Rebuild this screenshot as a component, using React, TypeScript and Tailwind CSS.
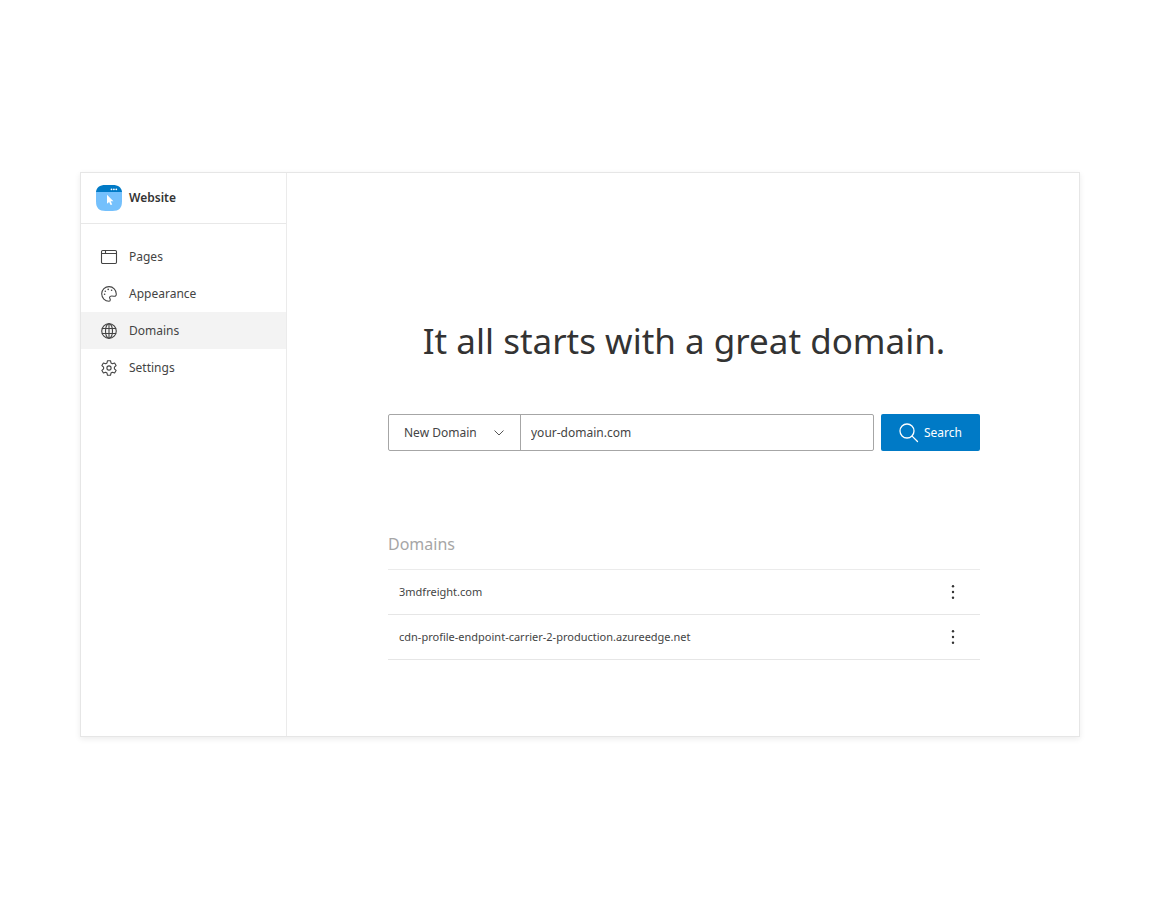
import type { ReactNode } from "react";

function Icon({ children }: { children: ReactNode }) {
  return (
    <svg
      viewBox="0 0 18 18"
      className="size-[18px] shrink-0"
      fill="none"
      stroke="#444"
      strokeWidth="1.1"
      strokeLinecap="round"
      strokeLinejoin="round"
      aria-hidden="true"
    >
      {children}
    </svg>
  );
}

function PagesIcon() {
  return (
    <Icon>
      <rect x="1.5" y="2.5" width="15" height="13" rx="1.2" />
      <path d="M1.5 5.5h15M5.5 2.5v3" />
    </Icon>
  );
}

function PaletteIcon() {
  return (
    <Icon>
      <path d="M9 16.200A7.300 7.300 0 1 1 16.300 9c0 2-1.200 2.500-2.600 2.200-1.900-.4-3.700-.4-4.100.9-.3 1 .6 1.500.7 2.700 0 .8-.5 1.400-1.300 1.400z" />
      <path d="M4.600 9.200h.01M5.300 6.200h.01M8.200 4.400h.01M11.600 5.200h.01" strokeWidth="1.6" />
    </Icon>
  );
}

function GlobeIcon() {
  return (
    <Icon>
      <circle cx="9" cy="9" r="7.3" />
      <ellipse cx="9" cy="9" rx="3.5" ry="7.3" />
      <path d="M2.300 6.500h13.400M2.300 11.500h13.400M9 1.700v14.600" />
    </Icon>
  );
}

function GearIcon() {
  return (
    <Icon>
      <path d="M7.500 1.700h3l.5 2.200 1.400.8 2.200-.7 1.500 2.600-1.700 1.600v1.600l1.700 1.600-1.500 2.600-2.200-.7-1.400.8-.5 2.200h-3L7 14.100l-1.400-.8-2.200.7-1.500-2.600 1.700-1.600V8.200L1.900 6.600 3.400 4l2.200.7L7 3.900z" />
      <circle cx="9" cy="9" r="2.1" />
    </Icon>
  );
}

function Logo() {
  return (
    <svg viewBox="0 0 26 26" className="size-[26px] shrink-0" aria-hidden="true">
      <path d="M0 6.500h26v10c0 6.500-3 9.500-9.500 9.500h-7C3 26 0 23 0 16.500z" fill="#74c0fc" />
      <path d="M0 7C.6 2.300 3.500 0 9.500 0h7C22.500 0 25.400 2.300 26 7z" fill="#007ac6" />
      <g fill="#fff">
        <circle cx="15.500" cy="4.300" r=".9" />
        <circle cx="17.900" cy="4.300" r=".9" />
        <circle cx="20.300" cy="4.300" r=".9" />
        <path d="M11 9.800v9l2.100-1.900 1.500 3.200 1.600-.7-1.500-3.200h2.700z" />
      </g>
    </svg>
  );
}

const links = [
  { label: "Pages", icon: <PagesIcon />, active: false },
  { label: "Appearance", icon: <PaletteIcon />, active: false },
  { label: "Domains", icon: <GlobeIcon />, active: true },
  { label: "Settings", icon: <GearIcon />, active: false },
];

const domains = ["3mdfreight.com", "cdn-profile-endpoint-carrier-2-production.azureedge.net"];

export default function App() {
  return (
    <div className="min-h-screen bg-white px-20 py-43 font-['Noto_Sans',sans-serif] text-[12px] leading-5 text-[#444]">
      <div className="flex border border-[#e6e6e6] bg-white shadow-[0_2px_6px_rgba(0,0,0,0.08)]">
        <aside className="w-[206px] shrink-0 border-r border-[#ebebeb]">
          <div className="flex h-[51px] items-center gap-[7px] border-b border-[#e8e8e8] px-[15px] font-semibold text-[#333]">
            <Logo />
            <span>Website</span>
          </div>
          <nav aria-label="Website" className="pt-[14px]">
            {links.map(({ label, icon, active }) => (
              <a
                key={label}
                href="#"
                aria-current={active ? "page" : undefined}
                className={`flex h-[37px] items-center gap-[11px] px-[19px] ${active ? "bg-[#f3f3f3]" : "bg-white"}`}
              >
                {icon}
                <span>{label}</span>
              </a>
            ))}
          </nav>
        </aside>

        <main className="min-w-0 flex-1 pt-36 pr-[99px] pb-[76px] pl-[101px]">
          <h1 className="text-center text-[35px] leading-[48px] text-[#333]">
            It all starts with a great domain.
          </h1>

          <form className="mt-[49px] flex h-[37px] gap-[7px]" onSubmit={(e) => e.preventDefault()}>
            <div className="flex min-w-0 flex-1 rounded-xs border border-[#a6a6a6]">
              <div className="relative w-[132px] shrink-0 border-r border-[#a6a6a6]">
                <select
                  aria-label="Domain type"
                  className="size-full appearance-none bg-transparent pl-[15px]"
                >
                  <option>New Domain</option>
                </select>
                <svg
                  viewBox="0 0 10 6"
                  className="pointer-events-none absolute top-[15px] right-4 h-[6px] w-[10px]"
                  fill="none"
                  stroke="#555"
                  aria-hidden="true"
                >
                  <path d="M.5.5 5 5 9.500.5" />
                </svg>
              </div>
              <input
                type="text"
                aria-label="Domain name"
                defaultValue="your-domain.com"
                className="min-w-0 flex-1 bg-transparent px-[10px] outline-none"
              />
            </div>
            <button
              type="submit"
              className="flex w-[99px] items-center justify-center gap-[5px] rounded-xs bg-[#007ac6] text-white"
            >
              <svg
                viewBox="0 0 20 20"
                className="size-5"
                fill="none"
                stroke="currentColor"
                strokeWidth="1.3"
                strokeLinecap="round"
                aria-hidden="true"
              >
                <circle cx="8" cy="8" r="7" />
                <path d="m13.100 13.100 5.400 5.400" />
              </svg>
              Search
            </button>
          </form>

          <section aria-labelledby="domains-title" className="mt-20">
            <h2 id="domains-title" className="pb-3 text-[16px] leading-[26px] text-[#a6a6a6]">
              Domains
            </h2>
            <ul className="border-t border-[#ebebeb] text-[11px]">
              {domains.map((domain) => (
                <li
                  key={domain}
                  className="flex h-[45px] items-center justify-between border-b border-[#e6e6e6] pr-4 pl-[11px]"
                >
                  <span>{domain}</span>
                  <button type="button" aria-label={`Options for ${domain}`} className="p-1">
                    <svg viewBox="0 0 14 14" className="size-[14px]" fill="#333" aria-hidden="true">
                      <circle cx="7" cy="1.300" r="1.200" />
                      <circle cx="7" cy="7" r="1.200" />
                      <circle cx="7" cy="12.700" r="1.200" />
                    </svg>
                  </button>
                </li>
              ))}
            </ul>
          </section>
        </main>
      </div>
    </div>
  );
}
